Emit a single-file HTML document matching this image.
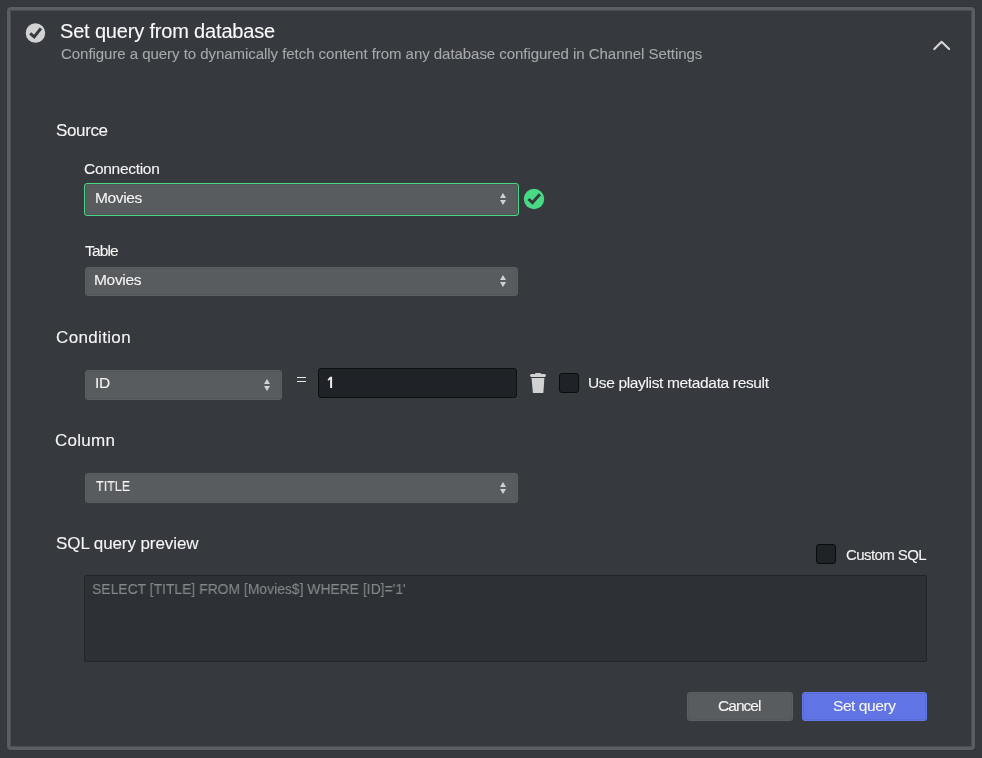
<!DOCTYPE html>
<html>
<head>
<meta charset="utf-8">
<style>
html,body{margin:0;padding:0;}
body{-webkit-font-smoothing:antialiased;width:982px;height:758px;background:#36393e;position:relative;overflow:hidden;font-family:"Liberation Sans",sans-serif;color:#f5f5f5;}
.a{position:absolute;white-space:nowrap;line-height:1;will-change:transform;-webkit-text-stroke:0.1px currentColor;}
.panel{position:absolute;left:7px;top:7px;width:962px;height:737px;border:3px solid #5b5e62;border-radius:4px;box-shadow:inset 0 0 0 1px #4b4e52, 0 0 0 1px #33363a;}
.sel{position:absolute;box-sizing:border-box;background:#595c5f;border:1px solid #5c5f62;border-radius:3px;box-shadow:inset 0 0 0 1px #54575b;}
.arr{position:absolute;width:0;height:0;border-left:3px solid transparent;border-right:3px solid transparent;}
.arr.up{border-bottom:5px solid #d2d2d2;}
.arr.dn{border-top:5px solid #d2d2d2;}
.cb{position:absolute;width:18px;height:18px;background:#1f2226;border:1px solid #0b0c0e;border-radius:3px;}
</style>
</head>
<body>
<div class="panel"></div>

<!-- header icon -->
<svg class="a" style="left:25px;top:23px" width="21" height="21" viewBox="0 0 21 21">
  <circle cx="10.45" cy="10" r="9.75" fill="#d2d2d2"/>
  <polyline points="5.2,10.3 9.2,13.9 15.9,5.4" fill="none" stroke="#36393e" stroke-width="3.0"/>
</svg>
<svg class="a" style="left:930px;top:36px" width="24" height="18" viewBox="0 0 24 18">
  <polyline points="4.3,13 11.6,5.8 19.1,13" fill="none" stroke="#d4d4d4" stroke-width="2.2" stroke-linecap="round" stroke-linejoin="round"/>
</svg>

<!-- Source -->
<div class="sel" style="left:84px;top:183px;width:435px;height:33px;border:1px solid #48d986;box-shadow:inset 0 0 0 1px #4f5256;"></div>
<div class="arr up" style="left:500px;top:193px"></div>
<div class="arr dn" style="left:500px;top:200px"></div>
<svg class="a" style="left:523px;top:188px" width="22" height="22" viewBox="0 0 22 22">
  <circle cx="11" cy="11" r="10.2" fill="#48d986"/>
  <polyline points="5.5,11.0 9.4,14.7 16.9,6.2" fill="none" stroke="#36393e" stroke-width="3.0"/>
</svg>

<div class="sel" style="left:85px;top:267px;width:433px;height:29px;"></div>
<div class="arr up" style="left:500px;top:275px"></div>
<div class="arr dn" style="left:500px;top:282px"></div>

<!-- Condition -->
<div class="sel" style="left:85px;top:370px;width:197px;height:30px;"></div>
<div class="arr up" style="left:264px;top:379px"></div>
<div class="arr dn" style="left:264px;top:386px"></div>
<div class="a" style="left:297px;top:377px;width:9px;height:1px;background:#e6e6e6"></div><div class="a" style="left:297px;top:381px;width:9px;height:1px;background:#e6e6e6"></div>
<div class="a" style="left:318px;top:368px;width:197px;height:28px;background:#1f2226;border:1px solid #0e0f11;border-radius:3px;"></div>
<svg class="a" style="left:324px;top:374px" width="12" height="16" viewBox="0 0 12 16"><path d="M6.1,2.8 L8.1,2.8 L8.1,14 L6.1,14 L6.1,5.4 L4.2,6.7 L3.6,5.5 Z" fill="#ececec"/></svg>
<svg class="a" style="left:528px;top:372px" width="20" height="23" viewBox="0 0 20 23">
  <path d="M6.6,2.3 Q7.2,1 8.6,1 L11.6,1 Q13,1 13.6,2.3 Z" fill="#d2d2d2"/>
  <path d="M3.6,2.1 L16.4,2.1 Q18,2.1 18,3.6 Q18,5 16.6,5 L3.4,5 Q2,5 2,3.6 Q2,2.1 3.6,2.1 Z" fill="#d2d2d2"/>
  <path d="M3.5,6.1 L16.4,6.1 L15.4,20.4 Q15.3,21.1 14.6,21.1 L5.7,21.1 Q5,21.1 4.9,20.4 Z" fill="#d2d2d2"/>
</svg>
<div class="cb" style="left:559px;top:373px"></div>

<!-- Column -->
<div class="sel" style="left:85px;top:473px;width:433px;height:30px;"></div>
<div class="arr up" style="left:500px;top:482px"></div>
<div class="arr dn" style="left:500px;top:489px"></div>

<!-- SQL -->
<div class="cb" style="left:816px;top:544px"></div>
<div class="a" style="left:84px;top:575px;width:841px;height:85px;background:#2d3034;border:1px solid #222427;border-radius:2px;"></div>

<!-- buttons -->
<div class="sel" style="left:687px;top:692px;width:106px;height:29px;"></div>
<div class="a" style="left:802px;top:692px;width:123px;height:27px;background:#6074e6;border:1px solid #6478ea;border-radius:3px;box-shadow:inset 0 0 0 1px #586bd6;"></div>

<div class="a" style="left:60.00px;top:21.07px;font-size:20px;letter-spacing:-0.173px;color:#fafafa;">Set query from database</div>
<div class="a" style="left:61.00px;top:46.30px;font-size:15px;letter-spacing:-0.043px;color:#a6a8ab;">Configure a query to dynamically fetch content from any database configured in Channel Settings</div>
<div class="a" style="left:55.50px;top:121.61px;font-size:17px;letter-spacing:-0.360px;">Source</div>
<div class="a" style="left:84.40px;top:160.58px;font-size:15.5px;letter-spacing:-0.289px;">Connection</div>
<div class="a" style="left:94.60px;top:189.88px;font-size:15.5px;letter-spacing:-0.360px;">Movies</div>
<div class="a" style="left:84.80px;top:242.88px;font-size:15.5px;letter-spacing:-0.850px;">Table</div>
<div class="a" style="left:94.20px;top:271.88px;font-size:15.5px;letter-spacing:-0.320px;">Movies</div>
<div class="a" style="left:56.30px;top:328.61px;font-size:17px;letter-spacing:0.350px;">Condition</div>
<div class="a" style="left:94.60px;top:374.88px;font-size:15.5px;letter-spacing:-0.300px;">ID</div>
<div class="a" style="left:588.40px;top:374.88px;font-size:15.5px;letter-spacing:-0.348px;">Use playlist metadata result</div>
<div class="a" style="left:55.20px;top:431.61px;font-size:17px;letter-spacing:0.280px;">Column</div>
<div class="a" style="left:95.80px;top:477.88px;font-size:15.5px;letter-spacing:0.000px;transform:scaleX(0.8101);transform-origin:0 0;">TITLE</div>
<div class="a" style="left:55.90px;top:534.91px;font-size:17px;letter-spacing:-0.087px;">SQL query preview</div>
<div class="a" style="left:846.00px;top:547.30px;font-size:15px;letter-spacing:-0.578px;">Custom SQL</div>
<div class="a" style="left:92.40px;top:581.08px;font-size:15.5px;letter-spacing:0.000px;color:#85888b;transform:scaleX(0.8969);transform-origin:0 0;">SELECT [TITLE] FROM [Movies$] WHERE [ID]='1'</div>
<div class="a" style="left:717.70px;top:697.88px;font-size:15.5px;letter-spacing:-0.960px;">Cancel</div>
<div class="a" style="left:832.60px;top:697.88px;font-size:15.5px;letter-spacing:-0.425px;">Set query</div>
</body>
</html>
